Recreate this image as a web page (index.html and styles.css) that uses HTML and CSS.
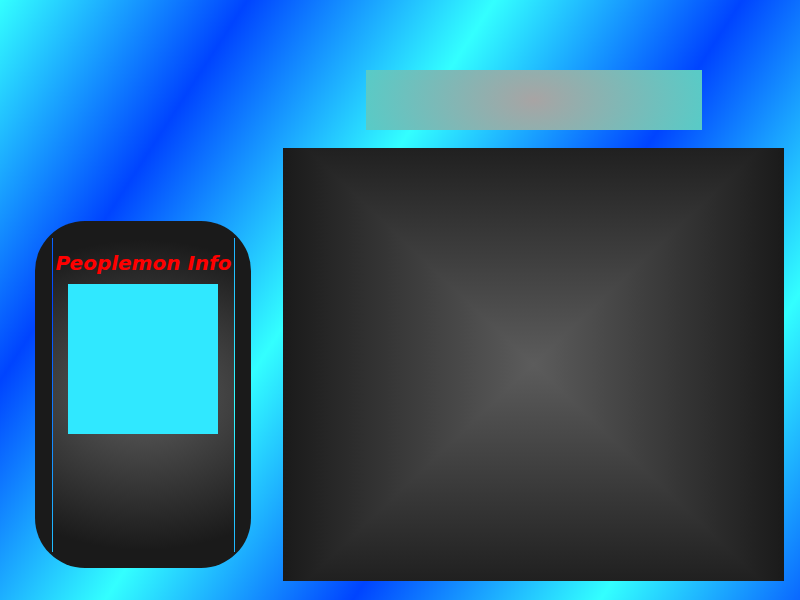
FILE: index.html
```html
<!DOCTYPE html>
<html lang="en">
<head>
  <meta charset="UTF-8">
  <meta name="viewport" content="width=device-width, initial-scale=1.0">
  <title>Peoplemon</title>
  <link rel="stylesheet" href="styles.css">
</head>
<body>

  <div class="layout">
    <aside class="info-card">
      <div class="info-screen">
        <h1 class="info-title">Peoplemon Info</h1>
        <div class="info-portrait"></div>
      </div>
    </aside>

    <main class="stage">
      <div class="stage-bar"></div>
      <div class="stage-view"></div>
    </main>
  </div>

</body>
</html>
```

FILE: styles.css
```css
:root {
  --sky: linear-gradient(123deg, #33ffff 0%, #0044ff 20.8%, #33ffff 41.6%, #0044ff 62.4%, #33ffff 83.2%, #0044ff 104%);
}

* {
  margin: 0;
  padding: 0;
  box-sizing: border-box;
}

html, body {
  height: 100%;
}

body {
  font-family: "DejaVu Sans", Verdana, sans-serif;
  background: var(--sky) fixed;
  overflow: hidden;
}

.layout {
  display: flex;
  align-items: flex-start;
  gap: 32px;
  padding: 70px 16px 0 35px;
}

/* tarjeta de la izquierda */
.info-card {
  margin-top: 151px;
  width: 216px;
  padding: 17px 16px 16px 17px;
  background-color: #1a1a1a;
  border-radius: 50px;
}

.info-screen {
  height: 314px;
  padding-top: 14px;
  border-left: 1px solid transparent;
  border-right: 1px solid transparent;
  /* las lineas dejan ver el fondo de la pagina */
  background:
    radial-gradient(ellipse 200px 155px at 50% 50%, #5e5e5e, #1a1a1a) padding-box,
    var(--sky) fixed border-box;
}

.info-title {
  font-size: 20px;
  line-height: 23px;
  font-weight: bold;
  font-style: italic;
  color: #ff0000;
  text-align: center;
  white-space: nowrap;
}

.info-portrait {
  width: 150px;
  height: 150px;
  margin: 9px 0 0 15px;
  background-color: #30e8ff;
}

/* zona principal */
.stage {
  display: flex;
  flex-direction: column;
  align-items: center;
  gap: 18px;
  width: 501px;
}

.stage-bar {
  width: 336px;
  height: 60px;
  background: radial-gradient(ellipse 170px 100px at 50% 50%, #a8a4a4, #5acac6);
}

.stage-view {
  width: 501px;
  height: 433px;
  background:
    linear-gradient(to right, #1a1a1a, #5c5c5c, #1a1a1a),
    linear-gradient(to bottom, #202020, #5c5c5c, #202020);
  background-blend-mode: darken;
}
```
